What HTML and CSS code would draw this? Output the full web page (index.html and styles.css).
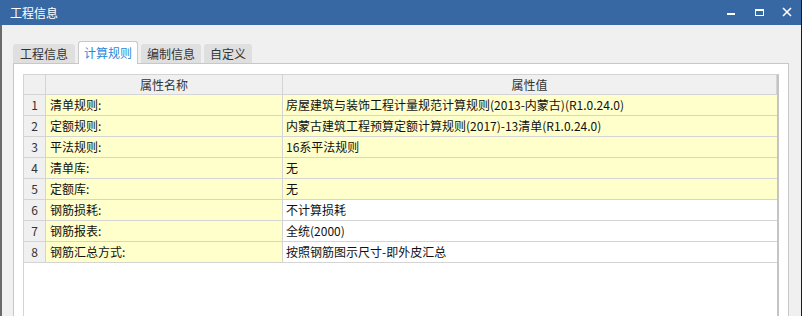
FILE: index.html
```html
<!DOCTYPE html>
<html lang="zh-CN">
<head>
    <meta charset="UTF-8">
    <title>工程信息</title>
    <link rel="stylesheet" href="styles.css">
</head>
<body>
    <div class="ventana">
        <div class="barra-titulo">
            <span class="titulo">工程信息</span>
            <div class="botones">
                <svg class="btn-ventana" width="28" height="25" viewBox="0 0 28 25">
                    <rect x="10" y="13" width="8" height="2" fill="#fff"/>
                </svg>
                <svg class="btn-ventana" width="28" height="25" viewBox="0 0 28 25">
                    <rect x="10.5" y="9.5" width="8" height="6" fill="none" stroke="#fff" stroke-width="1"/>
                    <rect x="10" y="9" width="9" height="2" fill="#fff"/>
                </svg>
                <svg class="btn-ventana" width="28" height="25" viewBox="0 0 28 25">
                    <path d="M10 8 L18 16 M18 8 L10 16" stroke="#fff" stroke-width="1.6"/>
                </svg>
            </div>
        </div>

        <div class="cuerpo">
            <div class="pestanas">
                <div class="pestana" style="width: 62px;">工程信息</div>
                <div class="pestana activa" style="width: 60px;">计算规则</div>
                <div class="pestana" style="width: 60px;">编制信息</div>
                <div class="pestana" style="width: 48px;">自定义</div>
            </div>

            <div class="panel">
                <div class="tabla">
                    <div class="celda cabecera"></div>
                    <div class="celda cabecera">属性名称</div>
                    <div class="celda cabecera">属性值</div>

                    <div class="celda num">1</div>
                    <div class="celda nombre">清单规则:</div>
                    <div class="celda valor amarillo">房屋建筑与装饰工程计量规范计算规则(2013-内蒙古)(R1.0.24.0)</div>

                    <div class="celda num">2</div>
                    <div class="celda nombre">定额规则:</div>
                    <div class="celda valor amarillo">内蒙古建筑工程预算定额计算规则(2017)-13清单(R1.0.24.0)</div>

                    <div class="celda num">3</div>
                    <div class="celda nombre">平法规则:</div>
                    <div class="celda valor amarillo">16系平法规则</div>

                    <div class="celda num">4</div>
                    <div class="celda nombre">清单库:</div>
                    <div class="celda valor amarillo">无</div>

                    <div class="celda num">5</div>
                    <div class="celda nombre">定额库:</div>
                    <div class="celda valor amarillo">无</div>

                    <div class="celda num">6</div>
                    <div class="celda nombre">钢筋损耗:</div>
                    <div class="celda valor">不计算损耗</div>

                    <div class="celda num">7</div>
                    <div class="celda nombre">钢筋报表:</div>
                    <div class="celda valor">全统(2000)</div>

                    <div class="celda num">8</div>
                    <div class="celda nombre">钢筋汇总方式:</div>
                    <div class="celda valor">按照钢筋图示尺寸-即外皮汇总</div>
                </div>
            </div>
        </div>
    </div>
</body>
</html>
```

FILE: styles.css
```css
body {
    margin: 0;
    font-family: "Noto Sans CJK SC", "Liberation Sans", sans-serif;
    font-size: 12px;
    background-color: #f0f0f0;
}
.ventana {
    width: 802px;
    height: 316px;
    display: flex;
    flex-direction: column;
    overflow: hidden;
}
.barra-titulo {
    height: 25px;
    background-color: #3768a4;
    color: white;
    display: flex;
    align-items: center;
    justify-content: space-between;
    border-right: 1px solid #1a1a1a;
}
.titulo {
    padding-left: 10px;
    font-size: 12px;
    line-height: 25px;
}
.botones {
    display: flex;
}
.btn-ventana {
    display: block;
}
.cuerpo {
    flex: 1;
    display: flex;
    flex-direction: column;
    min-height: 0;
    background-color: #f0f0f0;
    border-left: 2px solid #6a6a6a;
    border-right: 1px solid #1a1a1a;
    padding: 16px 12px 0 11px;
}
.pestanas {
    display: flex;
    align-items: flex-end;
    gap: 3px;
    height: 22px;
    position: relative;
    z-index: 1;
}
.pestana {
    box-sizing: border-box;
    height: 19px;
    background-color: #dfdfdf;
    color: #333;
    border-radius: 3px 3px 0 0;
    text-align: center;
    line-height: 19px;
    font-size: 12px;
}
.pestana.activa {
    height: 23px;
    margin-bottom: -1px;
    background-color: white;
    border: 1px solid #c8c8c8;
    border-bottom: none;
    color: #2b88d8;
    line-height: 22px;
}
.panel {
    flex: 1;
    min-height: 0;
    background: white;
    border: 1px solid #c8c8c8;
    border-bottom: none;
    padding: 10px 9px 0 9px;
    display: flex;
}
.tabla {
    flex: 1;
    display: grid;
    grid-template-columns: 22px 237px 1fr;
    grid-auto-rows: 21px;
    grid-template-rows: 20px;
    align-content: start;
    border-top: 1px solid #d4d4d4;
    border-left: 1px solid #d4d4d4;
    border-right: 2px solid #c4c4c4;
}
.celda {
    box-sizing: border-box;
    border-bottom: 1px solid #d4d4d4;
    border-right: 1px solid #d4d4d4;
    padding: 0 3px;
    line-height: 20px;
    white-space: nowrap;
    overflow: hidden;
    color: #111;
}
.celda.valor {
    border-right: none;
}
.cabecera {
    background-color: #f0f0f0;
    text-align: center;
    color: #333;
    line-height: 19px;
}
.num {
    background-color: #f0f0f0;
    text-align: center;
    color: #333;
    padding: 0;
}
.nombre {
    background-color: #ffffcc;
    padding-left: 4px;
}
.amarillo {
    background-color: #ffffcc;
}
```
